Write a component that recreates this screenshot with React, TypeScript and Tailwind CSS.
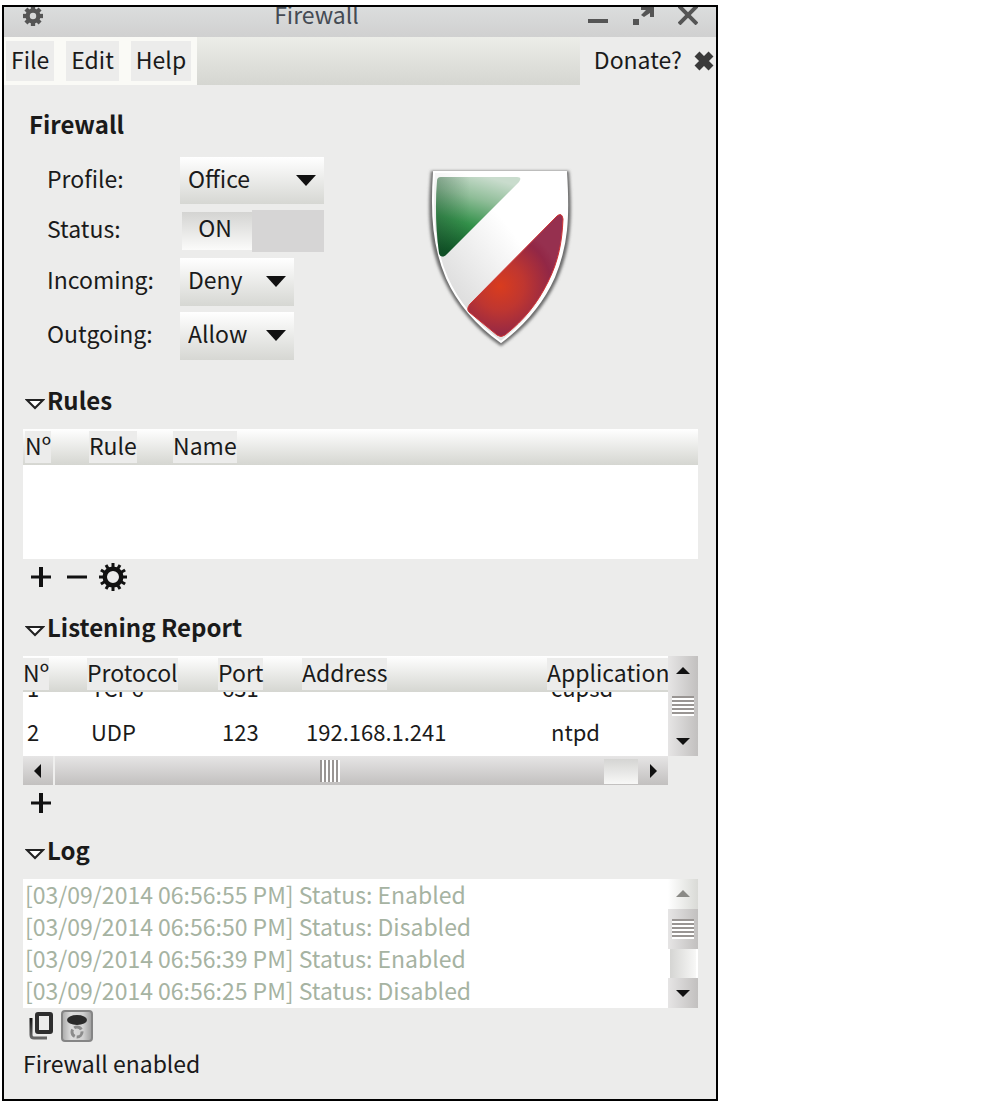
import { useState } from 'react';
import type { ReactNode } from 'react';

type Direction = 'up' | 'down' | 'left' | 'right';

const listeningRows = [
  { no: '1', protocol: 'TCP6', port: '631', address: '', application: 'cupsd' },
  { no: '2', protocol: 'UDP', port: '123', address: '192.168.1.241', application: 'ntpd' },
];

const logEntries = [
  '[03/09/2014 06:56:55 PM] Status: Enabled',
  '[03/09/2014 06:56:50 PM] Status: Disabled',
  '[03/09/2014 06:56:39 PM] Status: Enabled',
  '[03/09/2014 06:56:25 PM] Status: Disabled',
];

const arrowPaths: Record<Direction, string> = {
  up: 'M7 3 L14 10 H0 Z',
  down: 'M0 4 H14 L7 11 Z',
  left: 'M3 7 L10 0 V14 Z',
  right: 'M11 7 L4 0 V14 Z',
};

function ScrollArrow({ direction, label, disabled }: { direction: Direction; label: string; disabled?: boolean }) {
  return (
    <button
      type="button"
      aria-label={label}
      disabled={disabled}
      className="flex h-[30px] w-[30px] shrink-0 items-center justify-center text-[#111] disabled:text-[#8a8a86]"
    >
      <svg width="14" height="14" viewBox="0 0 14 14" fill="currentColor" aria-hidden="true">
        <path d={arrowPaths[direction]} />
      </svg>
    </button>
  );
}

function GripLines() {
  return (
    <svg width="22" height="20" viewBox="0 0 22 20" aria-hidden="true">
      <rect width="22" height="20" fill="#fff" />
      <path d="M0 1H22M0 5H22M0 9H22M0 13H22M0 17H22" stroke="#999593" strokeWidth="2" />
    </svg>
  );
}

interface GearIconProps {
  size: number;
  teeth: number;
  toothWidth: number;
  hole: number;
}

function GearIcon({ size, teeth, toothWidth, hole }: GearIconProps) {
  const angles = Array.from({ length: teeth }, (_, i) => (360 / teeth) * i);
  return (
    <svg width={size} height={size} viewBox="0 0 28 28" aria-hidden="true">
      <circle cx="14" cy="14" r={(hole + 10.5) / 2} fill="none" stroke="currentColor" strokeWidth={10.5 - hole} />
      {angles.map((angle) => (
        <rect
          key={angle}
          x={14 - toothWidth / 2}
          y="0"
          width={toothWidth}
          height="5"
          fill="currentColor"
          transform={`rotate(${angle} 14 14)`}
        />
      ))}
    </svg>
  );
}

function PlusIcon() {
  return (
    <svg width="20" height="20" viewBox="0 0 20 20" aria-hidden="true">
      <path d="M0 10H20" stroke="#111" strokeWidth="3" />
      <path d="M10 0V20" stroke="#111" strokeWidth="4" />
    </svg>
  );
}

function ShieldLogo() {
  return (
    <svg width="148" height="184" viewBox="16 16 148 184" role="img" aria-label="Firewall shield">
      <defs>
        <linearGradient id="green" x1="0.6" y1="0" x2="0.3" y2="1">
          <stop offset="0" stopColor="#c9dccd" />
          <stop offset="0.28" stopColor="#8fbd98" />
          <stop offset="0.6" stopColor="#33914a" />
          <stop offset="1" stopColor="#07501f" />
        </linearGradient>
        <linearGradient id="greenShade" x1="0" y1="0" x2="1" y2="0">
          <stop offset="0" stopColor="#2c4a3a" stopOpacity="0.3" />
          <stop offset="0.4" stopColor="#2c4a3a" stopOpacity="0" />
        </linearGradient>
        <radialGradient id="red" gradientUnits="userSpaceOnUse" cx="90" cy="136" r="60">
          <stop offset="0" stopColor="#d93c1e" />
          <stop offset="0.4" stopColor="#bf3630" />
          <stop offset="0.85" stopColor="#922746" />
          <stop offset="1" stopColor="#96304f" />
        </radialGradient>
        <linearGradient id="body" x1="0.8" y1="0.2" x2="0.2" y2="0.8">
          <stop offset="0.3" stopColor="#fff" />
          <stop offset="1" stopColor="#dcdcdc" />
        </linearGradient>
        <filter id="shadow" x="-10%" y="-10%" width="120%" height="120%">
          <feGaussianBlur stdDeviation="1.8" />
        </filter>
      </defs>
      <path
        d="M21 21H159C163 68 161 98 147 130C134 158 115 179 91 196C67 180 47 158 34 130C19 98 17 66 21 21Z"
        fill="#6a6a6a"
        filter="url(#shadow)"
      />
      <path
        d="M24 22H156C159 68 157 96 144 127C132 154 113 175 91 192C69 176 49 155 37 128C24 98 21 66 24 22Z"
        fill="url(#body)"
        stroke="#fff"
        strokeWidth="2"
      />
      <path
        d="M31 27H107C111 27 111 29 109 32L37 104C33 108 30 107 29 103C26 80 25 55 27 31Q27 27 31 27Z"
        fill="url(#green)"
      />
      <path
        d="M31 27H107C111 27 111 29 109 32L37 104C33 108 30 107 29 103C26 80 25 55 27 31Q27 27 31 27Z"
        fill="url(#greenShade)"
      />
      <path
        d="M147 66Q152 62 153 69C152 91 149 110 138 132C127 154 114 170 95 185Q91 188 87 185L59 162Q56 159 60 154Z"
        fill="url(#red)"
        stroke="#cf3434"
        strokeWidth="1"
      />
    </svg>
  );
}

function WindowBar() {
  return (
    <header className="flex h-[30px] items-start overflow-hidden bg-linear-to-b from-[#dbdddd] to-[#d0d0d0] pr-[18px] pl-[19px] text-[#555]">
      <div className="flex flex-1">
        <button type="button" aria-label="Window menu" className="-mt-px">
          <GearIcon size={20} teeth={8} toothWidth={6} hole={4.5} />
        </button>
      </div>
      <h1 className="pr-[88px] leading-[14px] text-[#454b54]">Firewall</h1>
      <div className="flex flex-1 justify-end gap-6">
        <button type="button" aria-label="Minimize">
          <svg width="20" height="18" viewBox="0 0 20 18" aria-hidden="true">
            <path d="M0 14H20" stroke="currentColor" strokeWidth="4" />
          </svg>
        </button>
        <button type="button" aria-label="Maximize">
          <svg width="22" height="18" viewBox="0 0 22 18" fill="currentColor" aria-hidden="true">
            <path d="M1 12H7V18H1ZM9 0H22V10H18V6L12 10L9 8L14 3H9Z" />
          </svg>
        </button>
        <button type="button" aria-label="Close">
          <svg width="20" height="18" viewBox="0 0 20 18" aria-hidden="true">
            <path d="M1 -1L19 17M19 -1L1 17" stroke="currentColor" strokeWidth="4" />
          </svg>
        </button>
      </div>
    </header>
  );
}

function MenuBar() {
  return (
    <nav className="flex h-12 items-stretch bg-linear-to-b from-[#ecede8] to-[#d5d6d1]">
      <div className="flex items-center gap-3 bg-[#fafaf6] pr-[6px] pl-[2px]">
        {['File', 'Edit', 'Help'].map((item) => (
          <button key={item} type="button" className="h-10 bg-[#ececeb] px-[5px] pb-1">
            {item}
          </button>
        ))}
      </div>
      <div className="ml-auto flex items-center gap-3 bg-[#ececeb] pr-[2px] pl-[14px]">
        <a href="#donate" className="pb-1">
          Donate?
        </a>
        <button type="button" aria-label="Dismiss donate">
          <svg width="20" height="20" viewBox="0 0 20 20" aria-hidden="true">
            <path d="M3 3L17 17M17 3L3 17" stroke="#3a3a3a" strokeWidth="7" />
          </svg>
        </button>
      </div>
    </nav>
  );
}

interface SelectRowProps {
  id: string;
  label: string;
  options: string[];
  wide?: boolean;
}

function SelectRow({ id, label, options, wide }: SelectRowProps) {
  return (
    <>
      <label htmlFor={id} className="pb-[6px]">
        {label}
      </label>
      <div className={wide ? 'relative h-[47px] w-36' : 'relative h-12 w-[114px]'}>
        <select
          id={id}
          className="h-full w-full appearance-none bg-linear-to-b from-white to-[#d6d7d3] pb-[6px] pl-2 leading-[36px]"
        >
          {options.map((option) => (
            <option key={option}>{option}</option>
          ))}
        </select>
        <svg
          width="20"
          height="11"
          viewBox="0 0 20 11"
          className="pointer-events-none absolute top-[18px] right-2"
          aria-hidden="true"
        >
          <path d="M0 0H20L10 11Z" fill="#111" />
        </svg>
      </div>
    </>
  );
}

function Expander({ title, children }: { title: string; children: ReactNode }) {
  const [open, setOpen] = useState(true);

  return (
    <section>
      <h2 className="text-2xl font-bold">
        <button
          type="button"
          aria-expanded={open}
          onClick={() => setOpen(!open)}
          className="flex h-[30px] items-center gap-[2px] pl-[2px]"
        >
          <svg width="20" height="12" viewBox="0 0 20 12" className={open ? 'mt-2' : 'mt-2 -rotate-90'} aria-hidden="true">
            <path d="M2 2H18L10 10Z" fill="#fff" stroke="#222" strokeWidth="2" />
          </svg>
          <span>{title}</span>
        </button>
      </h2>
      {open && <div className="mt-[14px]">{children}</div>}
    </section>
  );
}

function RulesTable() {
  return (
    <table className="block h-[130px] bg-white text-left">
      <thead className="block">
        <tr className="grid h-9 grid-cols-[64px_84px_1fr] items-center bg-linear-to-b from-white to-[#d5d6d1] pl-[2px]">
          {['Nº', 'Rule', 'Name'].map((heading) => (
            <th key={heading} scope="col" className="font-normal">
              <span className="block h-8 w-fit bg-[#ececeb] leading-[28px]">{heading}</span>
            </th>
          ))}
        </tr>
      </thead>
    </table>
  );
}

function ListeningTable() {
  return (
    <div className="grid grid-cols-[1fr_30px]">
      <table className="block h-[100px] overflow-hidden bg-white text-left">
        <thead className="relative z-10 block">
          <tr className="grid h-9 grid-cols-[64px_131px_84px_245px_1fr] items-center bg-linear-to-b from-white to-[#d5d6d1]">
            {['Nº', 'Protocol', 'Port', 'Address', 'Application'].map((heading) => (
              <th key={heading} scope="col" className="font-normal">
                <span className="block h-8 w-fit bg-[#ececeb] leading-[28px]">{heading}</span>
              </th>
            ))}
          </tr>
        </thead>
        {/* the list is scrolled down, so the first row sits half under the header */}
        <tbody className="-mt-[27px] block text-[22px]">
          {listeningRows.map((row) => (
            <tr key={row.no} className="grid h-11 grid-cols-[64px_131px_84px_245px_1fr] items-center">
              <td className="pl-1">{row.no}</td>
              <td className="pl-1">{row.protocol}</td>
              <td className="pl-1">{row.port}</td>
              <td className="pl-1">{row.address}</td>
              <td className="pl-1">{row.application}</td>
            </tr>
          ))}
        </tbody>
      </table>
      <div className="flex h-[100px] flex-col items-center justify-between bg-linear-to-r from-[#e6e5e5] to-[#c2c0bf]">
        <ScrollArrow direction="up" label="Scroll report up" />
        <GripLines />
        <ScrollArrow direction="down" label="Scroll report down" />
      </div>
      <div className="flex h-[29px] items-center bg-linear-to-b from-[#e6e5e5] to-[#c2c0bf]">
        <ScrollArrow direction="left" label="Scroll report left" />
        <div className="h-full w-[2px] bg-[#efefee]" />
        <div className="flex flex-1 justify-center">
          <svg width="20" height="22" viewBox="0 0 20 22" aria-hidden="true">
            <rect width="20" height="22" fill="#fff" />
            <path d="M1 0V22M5 0V22M9 0V22M13 0V22M17 0V22" stroke="#999593" strokeWidth="2" />
          </svg>
        </div>
        <div className="mt-[2px] h-[25px] w-[34px] bg-linear-to-b from-[#d5d5d3] to-[#f8f8f7]" />
        <ScrollArrow direction="right" label="Scroll report right" />
      </div>
    </div>
  );
}

function LogView() {
  return (
    <div className="flex h-[129px] bg-white">
      <ol className="flex-1 pl-[2px] text-[#a6b3a2]">
        {logEntries.map((entry) => (
          <li key={entry} className="h-8 leading-[30px]">
            {entry}
          </li>
        ))}
      </ol>
      <div className="flex w-[30px] flex-col">
        <div className="bg-linear-to-r from-white to-[#d9dad6]">
          <ScrollArrow direction="up" label="Scroll log up" disabled />
        </div>
        <div className="flex h-10 items-center justify-center bg-linear-to-r from-[#e6e5e5] to-[#c2c0bf]">
          <GripLines />
        </div>
        <div className="mx-[2px] flex-1 bg-linear-to-r from-[#d5d5d3] to-[#f8f8f7]" />
        <div className="bg-linear-to-r from-[#e6e5e5] to-[#c2c0bf]">
          <ScrollArrow direction="down" label="Scroll log down" />
        </div>
      </div>
    </div>
  );
}

export default function App() {
  const [enabled, setEnabled] = useState(true);

  return (
    <div className="min-h-screen bg-white pt-[5px] pl-[2px]">
      <main className="w-full max-w-[716px] border-2 border-black bg-[#ececeb] font-['Noto_Sans_CJK_SC',sans-serif] text-[23px] leading-[30px] text-[#1a1a1a]">
        <WindowBar />
        <MenuBar />

        <div className="pt-6 pr-[18px] pb-[21px] pl-[19px]">
          <h2 className="h-[30px] pl-[6px] text-2xl leading-[30px] font-bold">Firewall</h2>
          <div className="mt-[18px] flex">
            <div className="grid grid-cols-[133px_144px] items-center gap-y-[6px] pl-6">
              <SelectRow id="profile" label="Profile:" options={['Office', 'Home', 'Public']} wide />
              <label htmlFor="status" className="pb-[6px]">
                Status:
              </label>
              <button
                id="status"
                type="button"
                role="switch"
                aria-checked={enabled}
                onClick={() => setEnabled(!enabled)}
                className={enabled ? 'flex h-[42px] bg-[#d6d5d5]' : 'flex h-[42px] flex-row-reverse bg-[#d6d5d5]'}
              >
                <span className="flex h-[42px] w-[72px] items-stretch bg-[#ececeb] py-[2px] pl-[2px]">
                  <span className="flex-1 bg-linear-to-b from-[#d4d4d2] to-[#fbfbfa] pr-1">{enabled ? 'ON' : 'OFF'}</span>
                </span>
              </button>
              <SelectRow id="incoming" label="Incoming:" options={['Deny', 'Reject', 'Allow']} />
              <SelectRow id="outgoing" label="Outgoing:" options={['Allow', 'Reject', 'Deny']} />
            </div>
            <div className="flex flex-1 justify-center pt-[9px] pr-[22px]">
              <ShieldLogo />
            </div>
          </div>

          <div className="mt-[25px]">
            <Expander title="Rules">
              <RulesTable />
              <div className="flex h-9 items-center gap-4 pl-2">
                <button type="button" aria-label="Add rule">
                  <PlusIcon />
                </button>
                <button type="button" aria-label="Remove rule">
                  <svg width="20" height="20" viewBox="0 0 20 20" aria-hidden="true">
                    <path d="M0 10H20" stroke="#111" strokeWidth="3" />
                  </svg>
                </button>
                <button type="button" aria-label="Edit rule" className="-ml-1 text-[#111]">
                  <GearIcon size={28} teeth={12} toothWidth={3} hole={6} />
                </button>
              </div>
            </Expander>
          </div>

          <div className="mt-[17px]">
            <Expander title="Listening Report">
              <ListeningTable />
              <div className="flex h-9 items-center pl-2">
                <button type="button" aria-label="Add rule from report">
                  <PlusIcon />
                </button>
              </div>
            </Expander>
          </div>

          <div className="mt-[14px]">
            <Expander title="Log">
              <LogView />
              <div className="flex h-9 items-center gap-2 pl-[6px]">
                <button type="button" aria-label="Copy log">
                  <svg width="24" height="28" viewBox="0 0 24 28" fill="none" aria-hidden="true">
                    <defs>
                      <linearGradient id="copyInk" x1="0" y1="0" x2="0" y2="1">
                        <stop offset="0" stopColor="#111" />
                        <stop offset="1" stopColor="#666" />
                      </linearGradient>
                    </defs>
                    <rect x="8" y="2" width="14" height="18" rx="1" stroke="#2e2e2e" strokeWidth="4" />
                    <path d="M2 6V23Q2 26 5 26H18" stroke="url(#copyInk)" strokeWidth="3" />
                  </svg>
                </button>
                <button type="button" aria-label="Clear log">
                  <svg width="32" height="32" viewBox="0 0 32 32" aria-hidden="true">
                    <defs>
                      <linearGradient id="bin" x1="0" y1="0" x2="1" y2="0">
                        <stop offset="0" stopColor="#a8a8a8" />
                        <stop offset="0.3" stopColor="#dedede" />
                        <stop offset="0.7" stopColor="#d2d2d2" />
                        <stop offset="1" stopColor="#9c9c9c" />
                      </linearGradient>
                    </defs>
                    <rect x="1" y="1" width="30" height="30" rx="3" fill="url(#bin)" stroke="#858585" strokeWidth="2" />
                    <ellipse cx="16" cy="10" rx="10" ry="5" fill="#2b2b2b" />
                    <circle
                      cx="16"
                      cy="22"
                      r="5"
                      fill="none"
                      stroke="#8c8c8c"
                      strokeWidth="3"
                      strokeDasharray="8 2"
                    />
                  </svg>
                </button>
              </div>
            </Expander>
          </div>

          <p className="mt-1 leading-[30px]">{enabled ? 'Firewall enabled' : 'Firewall disabled'}</p>
        </div>
      </main>
    </div>
  );
}
